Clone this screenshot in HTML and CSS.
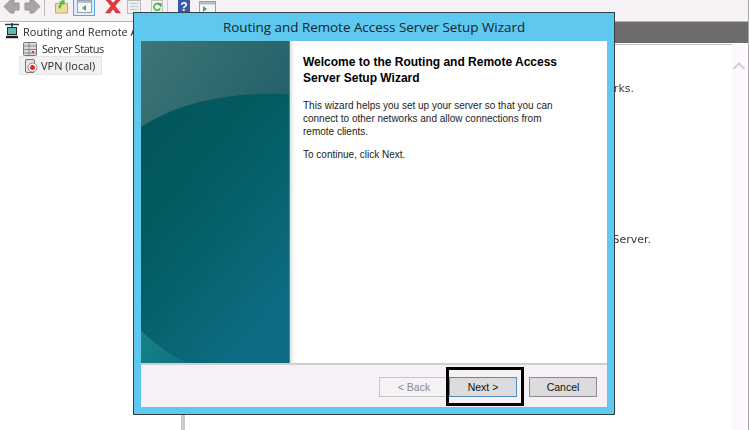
FILE: index.html
```html
<!DOCTYPE html>
<html lang="en">
<head>
<meta charset="utf-8">
<title>Routing and Remote Access Server Setup Wizard</title>
<link rel="stylesheet" href="styles.css">
</head>
<body>
<div class="console">
  <div class="toolbar">
    <svg class="toolbar-icons" width="220" height="21" viewBox="0 0 220 21">
      <path d="M4 6.500 10.500 0h3.500v3h5v7h-5v3h-3.500z" fill="#a6a6a6" stroke="#949494"/>
      <path d="M40 6.500 33.500 0h-3.500v3h-5v7h5v3h3.500z" fill="#a6a6a6" stroke="#949494"/>
      <rect x="44" y="0" width="1" height="16" fill="#bcbcbc"/>
      <path d="M55.500 3.500h12v9.500h-12z" fill="#f0dc9c" stroke="#c4aa68"/>
      <path d="M58 7 60.500 3 59 2l4-2 2 1-1 4-1.500-1L60 9z" fill="#5cba4a"/>
      <rect x="73.500" y="-2" width="21" height="17.500" fill="#dcedf8" stroke="#5aa6d4"/>
      <rect x="77.500" y="0.500" width="14" height="12" fill="#f4f6f8" stroke="#98a2aa"/>
      <rect x="78" y="1" width="13" height="2" fill="#b4bec6"/>
      <path d="M82 8l4-3v6z" fill="#4aa85a"/>
      <path d="M106 0h4l3 3 3-3h4l-5 6 5.500 7h-4.500l-3-4-3 4h-4.500l5.500-7z" fill="#e23a3a" stroke="#cc2a2a" stroke-width=".5"/>
      <rect x="127.500" y="0.500" width="13" height="13" fill="#eceef0" stroke="#b4bac0"/>
      <path d="M130 3.500h8M130 6.500h8M130 9.500h8" stroke="#c0ccd4"/>
      <rect x="151.500" y="0.500" width="11" height="13" fill="#f2f4f0" stroke="#c0c4be"/>
      <path d="M160 5a3.300 3.300 0 1 0 .2 3.500" fill="none" stroke="#46ad4e" stroke-width="1.600"/>
      <path d="M157.500 2.500l4.500 1-1 4z" fill="#46ad4e"/>
      <rect x="167" y="0" width="1" height="16" fill="#ccc"/>
      <rect x="178" y="-1" width="12" height="14" fill="#3458ac"/>
      <text class="help-mark" x="184" y="11" text-anchor="middle">?</text>
      <rect x="199.500" y="1.500" width="16" height="12" fill="#f4f6f8" stroke="#98a2aa"/>
      <rect x="200" y="2" width="15" height="2.500" fill="#b4bec6"/>
      <path d="M203 6l4 3-4 3z" fill="#4aa85a"/>
    </svg>
  </div>
  <div class="panes">
    <nav class="tree">
      <div class="node node-root">
        <svg class="icon" width="16" height="16" viewBox="0 0 16 16">
          <path d="M1 1.500h14M8 0v4" stroke="#2b3a3a" stroke-width="1.500"/>
          <rect x="3.500" y="4.500" width="9" height="7" fill="#5cbab4" stroke="#2a2a2a"/>
          <path d="M2 14h12" stroke="#222" stroke-width="2.500"/>
        </svg>
        <span>Routing and Remote Access</span>
      </div>
      <div class="node node-child">
        <svg class="icon" width="16" height="16" viewBox="0 0 16 16">
          <rect x="1.500" y="1.500" width="13" height="13" rx="1" fill="#dcdad8" stroke="#7a7674"/>
          <path d="M2 5h12M2 8.500h12M2 12h12M7 2v12" stroke="#8c8886"/>
          <rect x="10" y="10" width="2" height="2" fill="#d04040"/>
        </svg>
        <span class="label-status">Server Status</span>
      </div>
      <div class="node node-child node-selected">
        <svg class="icon" width="15" height="16" viewBox="0 0 15 16">
          <rect x="1.500" y="1.500" width="9" height="13" rx="1.500" fill="#e6e4e2" stroke="#7a7674"/>
          <circle cx="8.500" cy="9.500" r="4.500" fill="#fff" stroke="#888"/>
          <circle cx="8.500" cy="9.500" r="2.500" fill="#e8202a"/>
        </svg>
        <span>VPN (local)</span>
      </div>
    </nav>
    <main class="detail">
      <div class="detail-header"></div>
      <div class="detail-body">
        <div class="detail-text">
          <p class="line line-first">networks.</p>
          <p class="line line-second">Access Server.</p>
        </div>
        <div class="scrollbar">
          <svg class="chevron" width="12" height="8" viewBox="0 0 12 8"><path d="M0.500 7 6 1.500l5.500 5.500" fill="none" stroke="#d4d0d4" stroke-width="2"/></svg>
        </div>
      </div>
    </main>
  </div>
</div>

<section class="wizard">
  <header class="wizard-title">Routing and Remote Access Server Setup Wizard</header>
  <div class="wizard-inner">
    <div class="wizard-main">
      <svg class="wizard-art" width="149" height="322" viewBox="0 0 149 322" preserveAspectRatio="none">
        <defs>
          <linearGradient id="base" x1="0.15" y1="0" x2="0.7" y2="1">
            <stop offset="0" stop-color="#02535a"/>
            <stop offset="0.45" stop-color="#035c62"/>
            <stop offset="1" stop-color="#0f6c84"/>
          </linearGradient>
          <linearGradient id="glow" x1="0" y1="0" x2="1" y2="0.4">
            <stop offset="0" stop-color="#3f7576"/>
            <stop offset="1" stop-color="#25626a"/>
          </linearGradient>
          <linearGradient id="corner" x1="0" y1="0" x2="1" y2="0.6">
            <stop offset="0" stop-color="#168488"/>
            <stop offset="1" stop-color="#0f7480"/>
          </linearGradient>
        </defs>
        <rect width="149" height="322" fill="url(#base)"/>
        <path d="M0 0H149V53C90 51 40 60 0 86z" fill="url(#glow)"/>
        <path d="M0 290C14 302 28 314 46 322H0z" fill="url(#corner)"/>
        <rect x="148" width="1" height="322" fill="#4a8c9c"/>
      </svg>
      <div class="wizard-copy">
        <h1>Welcome to the Routing and Remote Access Server Setup Wizard</h1>
        <p>This wizard helps you set up your server so that you can connect to other networks and allow connections from remote clients.</p>
        <p>To continue, click Next.</p>
      </div>
    </div>
    <footer class="wizard-footer">
      <button class="btn btn-back" disabled>&lt; Back</button>
      <button class="btn btn-next">Next &gt;</button>
      <button class="btn btn-cancel">Cancel</button>
    </footer>
  </div>
</section>
<div class="callout"></div>
</body>
</html>
```
FILE: styles.css
```css
* { box-sizing: border-box; }
html, body { margin: 0; height: 100%; overflow: hidden; }
body { background: #fff; font-family: "Liberation Sans", Arial, sans-serif; width: 750px; height: 430px; }

.console { display: flex; flex-direction: column; height: 430px; width: 749px; border-right: 1px solid #a8a8a8; filter: blur(.35px); }
.toolbar { height: 22px; flex: none; background: #f5f1f5; border-bottom: 1px solid #b4b4b4; overflow: hidden; }
.toolbar-icons { display: block; }
.help-mark { font: bold 12px "Liberation Sans", sans-serif; fill: #fff; }

.panes { flex: 1; display: flex; min-height: 0; }
.tree { width: 185px; flex: none; padding-top: 1px; font: 11px "Open Sans", sans-serif; color: #2a2a2a; border-right: 4px solid #cbcbcb; overflow: hidden; }
.node { display: flex; align-items: center; height: 17px; white-space: nowrap; }
.node-root { height: 16px; margin: 0 0 1px 4px; gap: 3px; }
.node-child { margin-left: 22px; gap: 4px; }
.node-selected { margin-left: 20px; width: 81px; padding-left: 4px; gap: 2px; background: #f2f0f2; outline: 1px solid #e6e4e6; }
.label-status { letter-spacing: -.45px; }
.icon { flex: none; }

.detail { flex: 1; display: flex; flex-direction: column; min-width: 0; }
.detail-header { height: 22px; flex: none; background: #6d6b6e; border-bottom: 1px solid #fff; box-shadow: 0 1px 0 #c4c4c4; }
.detail-body { flex: 1; display: flex; min-height: 0; }
.detail-text { flex: 1; font: 11px "DejaVu Sans", sans-serif; color: #3a3a3a; min-width: 0; padding-top: 38px; }
.line { margin: 0; white-space: nowrap; display: flex; justify-content: flex-end; height: 14px; line-height: 14px; }
.line-first { padding-right: 98px; }
.line-second { margin-top: 137px; padding-right: 81px; }
.scrollbar { width: 16px; flex: none; background: #fdf8fd; padding: 18px 0 0 1px; }
.chevron { display: block; }

.wizard { position: absolute; left: 133px; top: 12px; width: 482px; height: 403px; background: #5fc8ef; border: 1px solid #33404a; padding: 0 7px 7px; display: flex; flex-direction: column; }
.wizard-title { height: 28px; flex: none; display: flex; align-items: center; justify-content: center; font: 13.400px "Open Sans", sans-serif; color: #16242e; }
.wizard-inner { flex: 1; display: flex; flex-direction: column; background: #fff; min-height: 0; box-shadow: 0 0 0 1px #a9d6ea inset; }
.wizard-main { flex: 1; display: flex; min-height: 0; }
.wizard-art { display: block; flex: none; }
.wizard-copy { flex: 1; padding: 13px 12px 0 13px; font-size: 10px; line-height: 13px; color: #1c1c1c; background: linear-gradient(90deg, #dcdcdc, #fff 4px); }
.wizard-copy h1 { margin: 0 0 13px; font-size: 12px; line-height: 16px; font-weight: 700; color: #000; width: 262px; }
.wizard-copy p { margin: 0 0 10px; width: 256px; }
.wizard-footer { height: 44px; flex: none; background: #f5f1f6; border-top: 2px solid #cfcfcf; display: flex; justify-content: flex-end; padding: 12px 10px 0 0; }
.btn { height: 20px; margin: 0; padding: 0; font: 10.500px "Liberation Sans", sans-serif; color: #111; background: #dcdcdc; border: 1px solid #8c8c8c; border-radius: 0; }
.btn-back { width: 70px; color: #8a8a8a; background: #f4f2f4; border-color: #c6c6c6; }
.btn-next { width: 68px; border-color: #4a90c4; margin-right: 12px; }
.btn-cancel { width: 68px; }

.callout { position: absolute; left: 446px; top: 367px; width: 78px; height: 39px; border: 3px solid #000; pointer-events: none; }
```
